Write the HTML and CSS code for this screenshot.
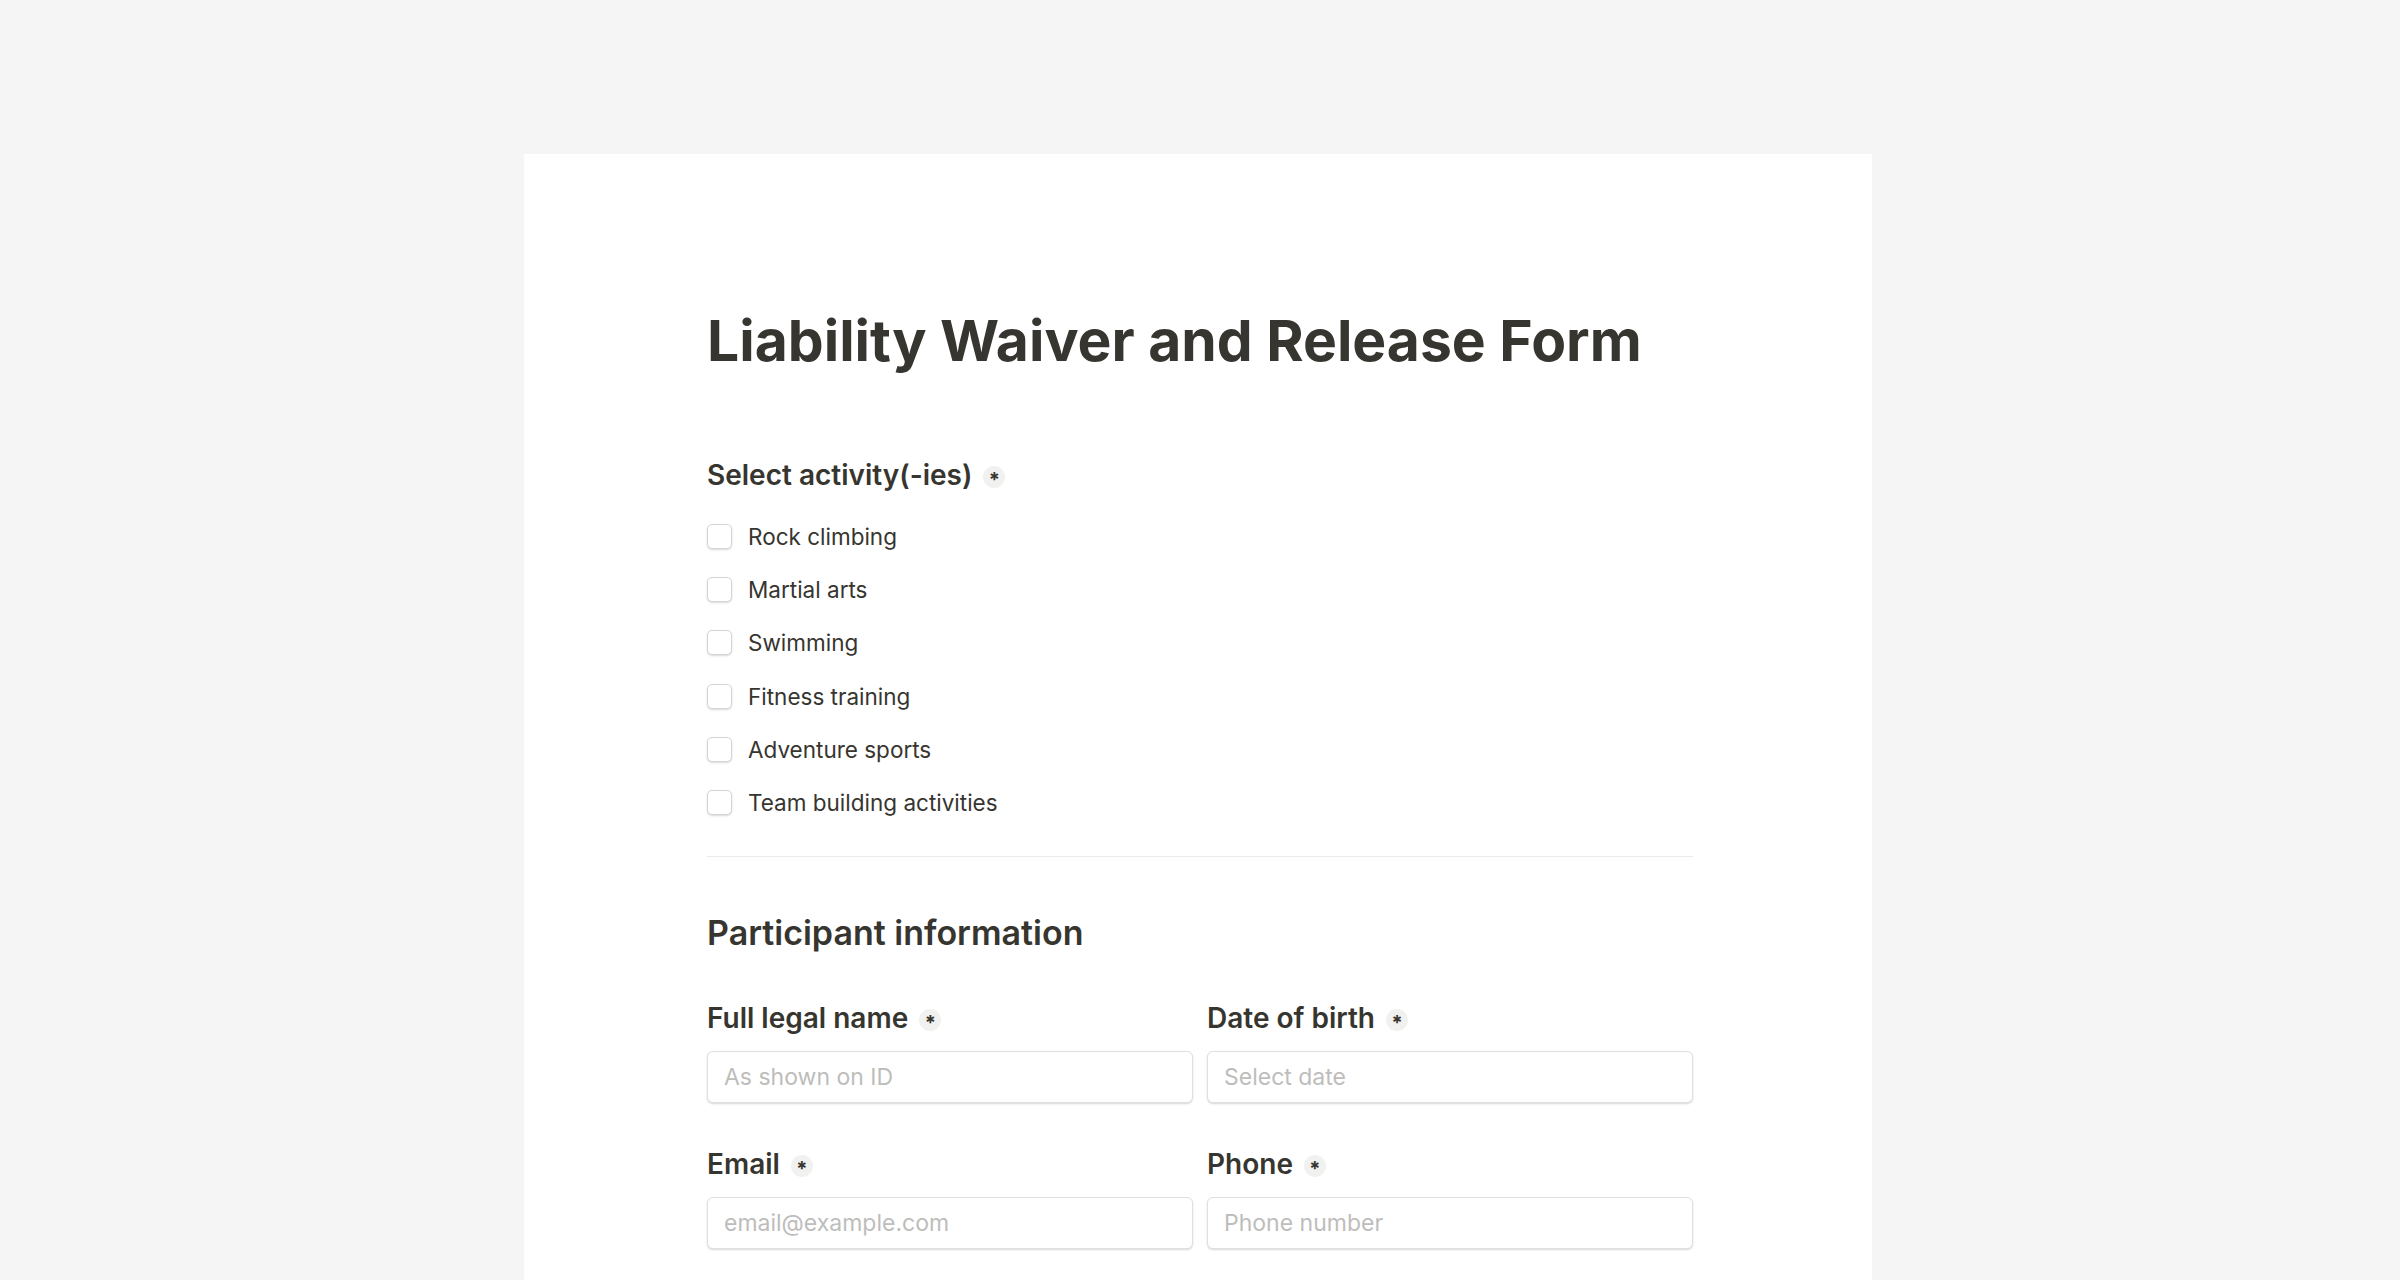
FILE: index.html
```html
<!DOCTYPE html>
<html>
<head>
	<meta charset="utf-8">
	<title>Liability Waiver and Release Form</title>
	<link rel="stylesheet" href="styles.css">
</head>
<body>

	<div class="sheet">
		<div class="form">

			<h1 class="form-title">Liability Waiver and Release Form</h1>

			<div class="field">
				<div class="field-label">Select activity(-ies) <span class="req">*</span></div>
				<div class="options">
					<label class="option"><span class="box"></span>Rock climbing</label>
					<label class="option"><span class="box"></span>Martial arts</label>
					<label class="option"><span class="box"></span>Swimming</label>
					<label class="option"><span class="box"></span>Fitness training</label>
					<label class="option"><span class="box"></span>Adventure sports</label>
					<label class="option"><span class="box"></span>Team building activities</label>
				</div>
			</div>

			<hr class="divider">

			<h2 class="section-title">Participant information</h2>

			<div class="grid">
				<div class="field">
					<div class="field-label">Full legal name <span class="req">*</span></div>
					<input class="text-input" type="text" placeholder="As shown on ID">
				</div>
				<div class="field">
					<div class="field-label">Date of birth <span class="req">*</span></div>
					<input class="text-input" type="text" placeholder="Select date">
				</div>
				<div class="field">
					<div class="field-label">Email <span class="req">*</span></div>
					<input class="text-input" type="text" placeholder="email@example.com">
				</div>
				<div class="field">
					<div class="field-label">Phone <span class="req">*</span></div>
					<input class="text-input" type="text" placeholder="Phone number">
				</div>
			</div>

		</div>
	</div>

</body>
</html>
```

FILE: styles.css
```css
body {
	margin: 0;
	background-color: #f5f5f5;
	font-family: Inter, "Noto Sans", sans-serif;
	color: #37352f;
}
.sheet {
	width: 1348px;
	margin: 154px 0 0 524px;
	background-color: #ffffff;
	padding: 153px 0 200px 0;
}
.form {
	width: 986px;
	margin-left: 183px;
}
.form-title {
	font-size: 57px;
	line-height: 67px;
	font-weight: 700;
	margin: 0 0 84px 0;
}
.field-label {
	font-size: 28px;
	line-height: 34px;
	font-weight: 600;
	display: flex;
	align-items: center;
}
.req {
	display: inline-block;
	width: 22px;
	height: 22px;
	box-sizing: border-box;
	padding-top: 8px;
	border-radius: 50%;
	background-color: #f1f1f0;
	font-size: 20px;
	line-height: 13px;
	text-align: center;
	font-weight: 700;
	margin: 4px 0 0 11px;
}
.options {
	display: flex;
	flex-direction: column;
	gap: 21.4px;
	margin-top: 28px;
}
.option {
	display: flex;
	align-items: center;
	height: 32px;
	font-size: 22.5px;
}
.box {
	width: 25px;
	height: 25px;
	box-sizing: border-box;
	border: 1px solid #d5d5d5;
	border-radius: 5px;
	box-shadow: 0 1px 2px rgba(0, 0, 0, 0.15);
	background-color: #ffffff;
	margin-right: 16px;
}
.divider {
	border: 0;
	border-top: 1px solid #ebebeb;
	margin: 37px 0 0 0;
}
.section-title {
	font-size: 34px;
	line-height: 40px;
	font-weight: 600;
	margin: 56px 0 0 0;
}
.grid {
	display: grid;
	grid-template-columns: 1fr 1fr;
	column-gap: 14px;
	row-gap: 44px;
	margin-top: 48px;
}
.grid .field-label {
	margin-bottom: 16px;
}
.text-input {
	display: block;
	width: 100%;
	box-sizing: border-box;
	height: 52px;
	border: 1px solid #e0e0e0;
	border-radius: 6px;
	box-shadow: 0 1px 2px rgba(0, 0, 0, 0.16);
	padding: 0 16px;
	font-family: Inter, "Noto Sans", sans-serif;
	font-size: 23px;
	color: #37352f;
	outline: none;
}
.text-input::placeholder {
	color: #bdbdbb;
}
```
